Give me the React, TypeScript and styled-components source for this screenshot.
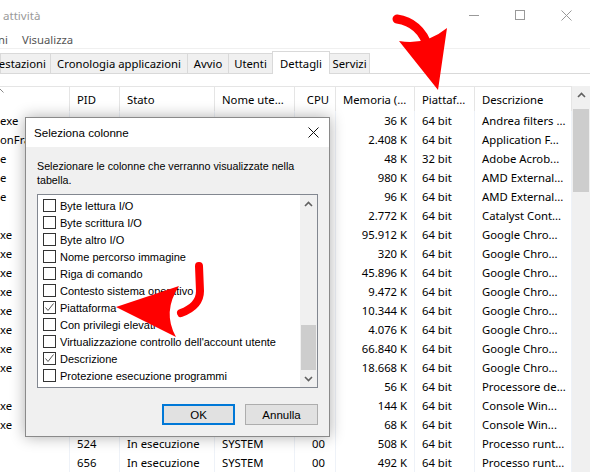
import { createGlobalStyle, styled } from 'styled-components';

const FONT = `"Noto Sans", "DejaVu Sans", sans-serif`;
const DIALOG_FONT = `"Liberation Sans", Arial, sans-serif`;

const GlobalStyle = createGlobalStyle`
  html, body {
    margin: 0;
    padding: 0;
    background: #ffffff;
  }
  body {
    font-family: ${FONT};
    font-size: 11.3px;
    color: #000;
    overflow: hidden;
  }
`;

const Screen = styled.div`
  position: relative;
  width: 590px;
  height: 472px;
  overflow: hidden;
  display: flex;
  flex-direction: column;
  background: #ffffff;
`;

// ---- window chrome ----

const TitleBar = styled.div`
  height: 30px;
  flex-shrink: 0;
  display: flex;
  align-items: center;
`;

const Title = styled.div`
  flex: 1;
  padding-left: 3px;
  color: #9a9a9a;
  font-size: 11.6px;
`;

const Caption = styled.div`
  width: 46px;
  height: 30px;
  display: flex;
  align-items: center;
  justify-content: center;
  &:last-child {
    margin-right: 1px;
  }
`;

const MenuBar = styled.div`
  height: 18px;
  flex-shrink: 0;
  display: flex;
  align-items: center;
  border-bottom: 1px solid #f0f0f0;
  overflow: hidden;
`;

const MenuItem = styled.div<{ $offset?: number }>`
  padding: 0 7px;
  color: #555;
  margin-left: ${(p) => p.$offset ?? 0}px;
`;

const TabStrip = styled.div`
  height: 24px;
  flex-shrink: 0;
  display: flex;
  align-items: flex-end;
  border-bottom: 1px solid #d9d9d9;
`;

const Tab = styled.div<{ $w: number; $active?: boolean }>`
  box-sizing: border-box;
  width: ${(p) => p.$w}px;
  height: ${(p) => (p.$active ? 23 : 20)}px;
  margin-left: -1px;
  margin-bottom: ${(p) => (p.$active ? -1 : 0)}px;
  border: 1px solid #d9d9d9;
  border-bottom: none;
  background: ${(p) => (p.$active ? '#ffffff' : '#f0f0f0')};
  display: flex;
  align-items: center;
  justify-content: center;
  white-space: nowrap;
  position: relative;
  z-index: ${(p) => (p.$active ? 1 : 0)};
  &:first-child {
    margin-left: 0;
    justify-content: flex-end;
    padding-right: 4px;
  }
`;

// ---- details table ----

const COLS = '70px 50px 95px 80px 41px 79px 60px 97px';

const Panel = styled.div`
  flex: 1;
  display: flex;
  padding-top: 12px;
  min-height: 0;
`;

const Table = styled.div`
  flex: 1;
  display: flex;
  flex-direction: column;
  overflow: hidden;
`;

const HeaderRow = styled.div`
  display: grid;
  grid-template-columns: ${COLS};
  height: 25px;
  box-sizing: border-box;
  border-top: 1px solid #e5e5e5;
  flex-shrink: 0;
`;

const HeaderCell = styled.div<{ $right?: boolean }>`
  position: relative;
  border-right: 1px solid #e5e5e5;
  padding: 0 6px 0 7px;
  display: flex;
  align-items: center;
  justify-content: ${(p) => (p.$right ? 'flex-end' : 'flex-start')};
  white-space: nowrap;
  overflow: hidden;
`;

const SortMark = styled.svg`
  position: absolute;
  left: -4px;
  top: 1px;
`;

const Row = styled.div`
  display: grid;
  grid-template-columns: ${COLS};
  height: 19px;
  flex-shrink: 0;
`;

const Cell = styled.div<{ $right?: boolean; $pad?: number }>`
  border-right: 1px solid #eef2f8;
  padding: 0 ${(p) => p.$pad ?? 7}px 0 7px;
  line-height: 19px;
  text-align: ${(p) => (p.$right ? 'right' : 'left')};
  white-space: nowrap;
  overflow: hidden;
`;

const NameCell = styled(Cell)`
  padding-left: 0;
`;

const VScroll = styled.div`
  width: 18px;
  flex-shrink: 0;
  background: #f0f0f0;
  display: flex;
  flex-direction: column;
`;

const ScrollBtn = styled.div<{ $h: number }>`
  height: ${(p) => p.$h}px;
  flex-shrink: 0;
  display: flex;
  align-items: center;
  justify-content: center;
`;

const Thumb = styled.div<{ $top: number; $h: number }>`
  margin: ${(p) => p.$top}px 1px 0 1px;
  height: ${(p) => p.$h}px;
  background: #cdcdcd;
  flex-shrink: 0;
`;

// ---- dialog ----

const Dialog = styled.div`
  position: absolute;
  left: 25px;
  top: 117px;
  width: 305px;
  height: 320px;
  box-sizing: border-box;
  border: 1px solid #8a8a8a;
  background: #f0f0f0;
  box-shadow: 0 0 14px rgba(0, 0, 0, 0.32);
  display: flex;
  flex-direction: column;
  z-index: 5;
  font-family: ${DIALOG_FONT};
  font-size: 11px;
`;

const DialogTitle = styled.div`
  height: 29px;
  flex-shrink: 0;
  background: #ffffff;
  display: flex;
  align-items: center;
  justify-content: space-between;
  padding: 0 10px 0 8px;
  font-size: 11.6px;
`;

const DialogBody = styled.div`
  flex: 1;
  display: flex;
  flex-direction: column;
  padding: 12px 11px 11px 11px;
`;

const Hint = styled.p`
  margin: 0;
  line-height: 14px;
  font-size: 10.7px;
  white-space: nowrap;
`;

const ListBox = styled.div`
  margin-top: 7px;
  height: 194px;
  flex-shrink: 0;
  box-sizing: border-box;
  border: 1px solid #828790;
  background: #ffffff;
  display: flex;
`;

const Items = styled.div`
  flex: 1;
  padding-top: 2px;
  overflow: hidden;
`;

const Item = styled.div`
  height: 17px;
  display: flex;
  align-items: center;
  gap: 4px;
  padding-left: 5px;
  white-space: nowrap;
`;

const Box = styled.div`
  width: 13px;
  height: 13px;
  box-sizing: border-box;
  border: 1px solid #333333;
  background: #ffffff;
  display: flex;
  align-items: center;
  justify-content: center;
  flex-shrink: 0;
`;

const ListScroll = styled(VScroll)`
  width: 17px;
`;

const Track = styled.div`
  flex: 1;
  display: flex;
  flex-direction: column;
  justify-content: flex-end;
`;

const ListThumb = styled.div`
  height: 45px;
  margin: 0 1px;
  background: #cdcdcd;
`;

const Buttons = styled.div`
  margin-top: auto;
  display: flex;
  justify-content: flex-end;
  gap: 10px;
`;

const Button = styled.div<{ $default?: boolean }>`
  width: 73px;
  height: 21px;
  box-sizing: border-box;
  background: #e1e1e1;
  border: ${(p) => (p.$default ? '2px solid #0078d7' : '1px solid #adadad')};
  display: flex;
  align-items: center;
  justify-content: center;
  font-size: 11.5px;
`;

const Overlay = styled.svg`
  position: absolute;
  left: 0;
  top: 0;
  pointer-events: none;
  z-index: 10;
`;

// ---- icons ----

const Chevron = ({ down = false }: { down?: boolean }) => (
  <svg width="9" height="6" viewBox="0 0 9 6">
    <polyline
      points={down ? '1,1 4.5,4.5 8,1' : '1,5 4.5,1.5 8,5'}
      fill="none"
      stroke="#606060"
      strokeWidth="1.6"
    />
  </svg>
);

const Check = () => (
  <svg width="11" height="11" viewBox="0 0 11 11">
    <polyline points="1.5,5.5 4,8.5 9.5,1.5" fill="none" stroke="#555" strokeWidth="1" />
  </svg>
);

const CloseGlyph = ({ size, color }: { size: number; color: string }) => (
  <svg width={size} height={size} viewBox={`0 0 ${size} ${size}`}>
    <path d={`M0.5,0.5 L${size - 0.5},${size - 0.5} M${size - 0.5},0.5 L0.5,${size - 0.5}`} stroke={color} strokeWidth="1" />
  </svg>
);

// ---- data ----

type Proc = {
  name: string;
  mem: string;
  arch: string;
  desc: string;
  pid?: string; // only rows not covered by the dialog
};

const procs: Proc[] = [
  { name: 'exe', pid: '2900', mem: '36 K', arch: '64 bit', desc: 'Andrea filters ...' },
  { name: 'onFra', mem: '2.408 K', arch: '64 bit', desc: 'Application F...' },
  { name: 'e', mem: '48 K', arch: '32 bit', desc: 'Adobe Acrob...' },
  { name: 'e', mem: '980 K', arch: '64 bit', desc: 'AMD External...' },
  { name: 'e', mem: '96 K', arch: '64 bit', desc: 'AMD External...' },
  { name: '', mem: '2.772 K', arch: '64 bit', desc: 'Catalyst Cont...' },
  { name: 'xe', mem: '95.912 K', arch: '64 bit', desc: 'Google Chro...' },
  { name: 'xe', mem: '320 K', arch: '64 bit', desc: 'Google Chro...' },
  { name: 'xe', mem: '45.896 K', arch: '64 bit', desc: 'Google Chro...' },
  { name: 'xe', mem: '9.472 K', arch: '64 bit', desc: 'Google Chro...' },
  { name: 'xe', mem: '10.344 K', arch: '64 bit', desc: 'Google Chro...' },
  { name: 'xe', mem: '4.076 K', arch: '64 bit', desc: 'Google Chro...' },
  { name: 'xe', mem: '66.840 K', arch: '64 bit', desc: 'Google Chro...' },
  { name: 'xe', mem: '18.668 K', arch: '64 bit', desc: 'Google Chro...' },
  { name: '', mem: '56 K', arch: '64 bit', desc: 'Processore de...' },
  { name: 'xe', mem: '144 K', arch: '64 bit', desc: 'Console Win...' },
  { name: 'xe', mem: '68 K', arch: '64 bit', desc: 'Console Win...' },
  { name: '', pid: '524', mem: '508 K', arch: '64 bit', desc: 'Processo runt...' },
  { name: '', pid: '656', mem: '492 K', arch: '64 bit', desc: 'Processo runt...' },
];

const columns = [
  { label: 'Byte lettura I/O', on: false },
  { label: 'Byte scrittura I/O', on: false },
  { label: 'Byte altro I/O', on: false },
  { label: 'Nome percorso immagine', on: false },
  { label: 'Riga di comando', on: false },
  { label: 'Contesto sistema operativo', on: false },
  { label: 'Piattaforma', on: true },
  { label: 'Con privilegi elevati', on: false },
  { label: "Virtualizzazione controllo dell'account utente", on: false },
  { label: 'Descrizione', on: true },
  { label: 'Protezione esecuzione programmi', on: false },
];

const tabs = [
  { label: 'estazioni', w: 51 },
  { label: 'Cronologia applicazioni', w: 138 },
  { label: 'Avvio', w: 42 },
  { label: 'Utenti', w: 45 },
  { label: 'Dettagli', w: 58, active: true },
  { label: 'Servizi', w: 41 },
];

export default function App() {
  return (
    <Screen>
      <GlobalStyle />
      <TitleBar>
        <Title>attività</Title>
        <Caption>
          <svg width="10" height="1">
            <rect width="10" height="1" fill="#999" />
          </svg>
        </Caption>
        <Caption>
          <svg width="10" height="10">
            <rect x="0.5" y="0.5" width="9" height="9" fill="none" stroke="#999" />
          </svg>
        </Caption>
        <Caption>
          <CloseGlyph size={11} color="#999" />
        </Caption>
      </TitleBar>

      <MenuBar>
        <MenuItem $offset={-9}>ni</MenuItem>
        <MenuItem>Visualizza</MenuItem>
      </MenuBar>

      <TabStrip>
        {tabs.map((t) => (
          <Tab key={t.label} $w={t.w} $active={t.active}>
            {t.label}
          </Tab>
        ))}
      </TabStrip>

      <Panel>
        <Table>
          <HeaderRow>
            <HeaderCell>
              <SortMark width="8" height="5" viewBox="0 0 8 5">
                <polyline points="0.5,4.5 4,1 7.5,4.5" fill="none" stroke="#888" strokeWidth="1" />
              </SortMark>
            </HeaderCell>
            <HeaderCell>PID</HeaderCell>
            <HeaderCell>Stato</HeaderCell>
            <HeaderCell>Nome ute...</HeaderCell>
            <HeaderCell $right>CPU</HeaderCell>
            <HeaderCell>Memoria (...</HeaderCell>
            <HeaderCell>Piattaf...</HeaderCell>
            <HeaderCell>Descrizione</HeaderCell>
          </HeaderRow>
          {procs.map((p, i) => (
            <Row key={i}>
              <NameCell>{p.name}</NameCell>
              <Cell>{p.pid}</Cell>
              <Cell>{p.pid && 'In esecuzione'}</Cell>
              <Cell>{p.pid && 'SYSTEM'}</Cell>
              <Cell $right $pad={10}>
                {p.pid && '00'}
              </Cell>
              <Cell $right>{p.mem}</Cell>
              <Cell>{p.arch}</Cell>
              <Cell>{p.desc}</Cell>
            </Row>
          ))}
        </Table>
        <VScroll>
          <ScrollBtn $h={17}>
            <Chevron />
          </ScrollBtn>
          <Thumb $top={6} $h={83} />
        </VScroll>
      </Panel>

      <Dialog>
        <DialogTitle>
          <span>Seleziona colonne</span>
          <CloseGlyph size={11} color="#111" />
        </DialogTitle>
        <DialogBody>
          <Hint>
            Selezionare le colonne che verranno visualizzate nella
            <br />
            tabella.
          </Hint>
          <ListBox>
            <Items>
              {columns.map((c) => (
                <Item key={c.label}>
                  <Box>{c.on && <Check />}</Box>
                  <span>{c.label}</span>
                </Item>
              ))}
            </Items>
            <ListScroll>
              <ScrollBtn $h={17}>
                <Chevron />
              </ScrollBtn>
              <Track>
                <ListThumb />
              </Track>
              <ScrollBtn $h={17}>
                <Chevron down />
              </ScrollBtn>
            </ListScroll>
          </ListBox>
          <Buttons>
            <Button $default>OK</Button>
            <Button>Annulla</Button>
          </Buttons>
        </DialogBody>
      </Dialog>

      <Overlay width="590" height="472" viewBox="0 0 590 472">
        <path d="M397,19 C411,21 423,30 428,47" fill="none" stroke="#ff0000" strokeWidth="9" strokeLinecap="round" />
        <path d="M399,41 Q425,46 447,28 L438,90 Z" fill="#ff0000" />
        <path d="M199,266 L200,291 Q200,306 181,313" fill="none" stroke="#ff0000" strokeWidth="8" strokeLinecap="round" />
        <path d="M179,286 Q162,312 176,337 L116,307 Z" fill="#ff0000" />
      </Overlay>
    </Screen>
  );
}
